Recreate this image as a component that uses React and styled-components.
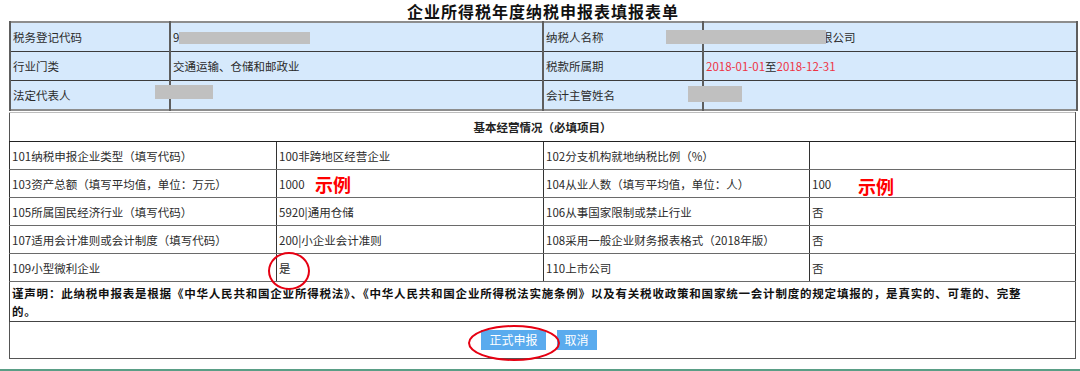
import React from "react";
import styled, { createGlobalStyle } from "styled-components";

const GlobalStyle = createGlobalStyle`
    html, body {
        margin: 0;
        padding: 0;
        background: #ffffff;
    }
    body {
        font-family: "Noto Sans CJK SC", "Noto Sans", sans-serif;
        color: #2b2b2b;
    }
`;

const App = () => {
    return (
        <Page>
            <GlobalStyle />
            <Title>企业所得税年度纳税申报表填报表单</Title>

            <InfoTable>
                <colgroup>
                    <col style={{ width: 160 }} />
                    <col style={{ width: 373 }} />
                    <col style={{ width: 160 }} />
                    <col style={{ width: 374 }} />
                </colgroup>
                <tbody>
                    <tr>
                        <InfoCell>税务登记代码</InfoCell>
                        <InfoCell>9</InfoCell>
                        <InfoCell>纳税人名称</InfoCell>
                        <InfoCell>
                            <Pushed>限公司</Pushed>
                        </InfoCell>
                    </tr>
                    <tr>
                        <InfoCell>行业门类</InfoCell>
                        <InfoCell>交通运输、仓储和邮政业</InfoCell>
                        <InfoCell>税款所属期</InfoCell>
                        <InfoCell>
                            <DateText>2018-01-01</DateText>至
                            <DateText>2018-12-31</DateText>
                        </InfoCell>
                    </tr>
                    <tr>
                        <InfoCell>法定代表人</InfoCell>
                        <InfoCell></InfoCell>
                        <InfoCell>会计主管姓名</InfoCell>
                        <InfoCell></InfoCell>
                    </tr>
                </tbody>
            </InfoTable>

            <FormTable>
                <colgroup>
                    <col style={{ width: 267 }} />
                    <col style={{ width: 267 }} />
                    <col style={{ width: 266 }} />
                    <col style={{ width: 266 }} />
                </colgroup>
                <tbody>
                    <tr>
                        <HeadCell colSpan={4}>基本经营情况（必填项目）</HeadCell>
                    </tr>
                    {rows.map((row) => (
                        <tr key={row[0]}>
                            {row.map((text, i) => (
                                <FormCell key={i}>{text}</FormCell>
                            ))}
                        </tr>
                    ))}
                    <tr>
                        <NoticeCell colSpan={4}>
                            谨声明：此纳税申报表是根据《中华人民共和国企业所得税法》、《中华人民共和国企业所得税法实施条例》以及有关税收政策和国家统一会计制度的规定填报的，是真实的、可靠的、完整
                            <br />
                            的。
                        </NoticeCell>
                    </tr>
                    <tr>
                        <ActionCell colSpan={4}>
                            <Actions>
                                <Button>正式申报</Button>
                                <Button>取消</Button>
                            </Actions>
                        </ActionCell>
                    </tr>
                </tbody>
            </FormTable>

            <BottomRule />

            {/* redactions and annotations drawn over the form */}
            <Redact $x={179} $y={32} $w={131} $h={12} />
            <Redact $x={666} $y={30} $w={160} $h={14} />
            <Redact $x={155} $y={85} $w={58} $h={14} />
            <Redact $x={688} $y={86} $w={54} $h={16} />
            <Sample $x={315} $y={174}>示例</Sample>
            <Sample $x={858} $y={176}>示例</Sample>
            <Ring $x={268} $y={252} $w={42} $h={38} />
            <Ring $x={468} $y={325} $w={92} $h={36} />
        </Page>
    );
};

const rows = [
    ["101纳税申报企业类型（填写代码）", "100非跨地区经营企业", "102分支机构就地纳税比例（%）", ""],
    ["103资产总额（填写平均值，单位：万元）", "1000", "104从业人数（填写平均值，单位：人）", "100"],
    ["105所属国民经济行业（填写代码）", "5920|通用仓储", "106从事国家限制或禁止行业", "否"],
    ["107适用会计准则或会计制度（填写代码）", "200|小企业会计准则", "108采用一般企业财务报表格式（2018年版）", "否"],
    ["109小型微利企业", "是", "110上市公司", "否"],
];

//Styled-Components
const Page = styled.div`
    position: relative;
    width: 1080px;
    height: 371px;
    overflow: hidden;
`;
const Title = styled.h1`
    margin: 0;
    box-sizing: border-box;
    height: 21px;
    padding-top: 1px;
    line-height: 20px;
    text-align: center;
    font-size: 16px;
    font-weight: bold;
    letter-spacing: 1px;
    color: #111;
    padding-left: 6px;
`;
const InfoTable = styled.table`
    margin-left: 9px;
    width: 1067px;
    table-layout: fixed;
    border-collapse: collapse;
    border: 2px solid #8d8d8d;
    background: #d6e9fc;
    font-size: 11.5px;
`;
const InfoCell = styled.td`
    height: 28px;
    padding: 0 2px;
    border-top: 1px solid #3c3c3c;
    border-bottom: 1px solid #3c3c3c;
    border-left: 2px solid #5e5e5e;
    border-right: 2px solid #5e5e5e;
    vertical-align: middle;
    white-space: nowrap;
    overflow: hidden;
    color: #2b2b2b;
`;
const Pushed = styled.span`
    padding-left: 115px;
`;
const DateText = styled.span`
    color: #ee3344;
`;
const FormTable = styled.table`
    margin-left: 9px;
    margin-top: 1px;
    width: 1066px;
    table-layout: fixed;
    border-collapse: collapse;
    border: 1px solid #555;
    border-top-color: #bdbdbd;
    font-size: 11.5px;
`;
const FormCell = styled.td`
    height: 27px;
    padding: 0 2px;
    border: 1px solid #6a6a6a;
    border-left-color: #333;
    border-right-color: #333;
    vertical-align: middle;
    white-space: nowrap;
    overflow: hidden;
    color: #2b2b2b;
`;
const HeadCell = styled.td`
    height: 26px;
    text-align: center;
    font-weight: bold;
    font-size: 11.5px;
    border-bottom: 1px solid #222;
    vertical-align: middle;
    color: #222;
`;
const NoticeCell = styled.td`
    padding: 2px 2px 1px;
    font-weight: bold;
    font-size: 11.5px;
    line-height: 18px;
    letter-spacing: 0.8px;
    border: 1px solid #444;
    color: #111;
`;
const ActionCell = styled.td`
    height: 36px;
    padding: 0;
    border: 1px solid #555;
    vertical-align: middle;
`;
const Actions = styled.div`
    display: flex;
    justify-content: center;
    gap: 11px;
    padding-right: 7px;
`;
const Button = styled.button`
    height: 20px;
    padding: 0 8px;
    border: none;
    background: #5aabee;
    color: #fff;
    font-family: "Noto Sans CJK SC", sans-serif;
    font-size: 12px;
    line-height: 20px;
`;
const BottomRule = styled.div`
    margin-top: 10px;
    height: 2px;
    background: #5a9e86;
`;
const Redact = styled.div`
    position: absolute;
    left: ${(p) => p.$x}px;
    top: ${(p) => p.$y}px;
    width: ${(p) => p.$w}px;
    height: ${(p) => p.$h}px;
    background: #c0c0c0;
`;
const Sample = styled.div`
    position: absolute;
    left: ${(p) => p.$x}px;
    top: ${(p) => p.$y}px;
    font-size: 18px;
    font-weight: bold;
    color: #ff0000;
    line-height: 20px;
`;
const Ring = styled.div`
    position: absolute;
    left: ${(p) => p.$x}px;
    top: ${(p) => p.$y}px;
    width: ${(p) => p.$w}px;
    height: ${(p) => p.$h}px;
    box-sizing: border-box;
    border: 2px solid #e60012;
    border-radius: 50%;
`;

export default App;
